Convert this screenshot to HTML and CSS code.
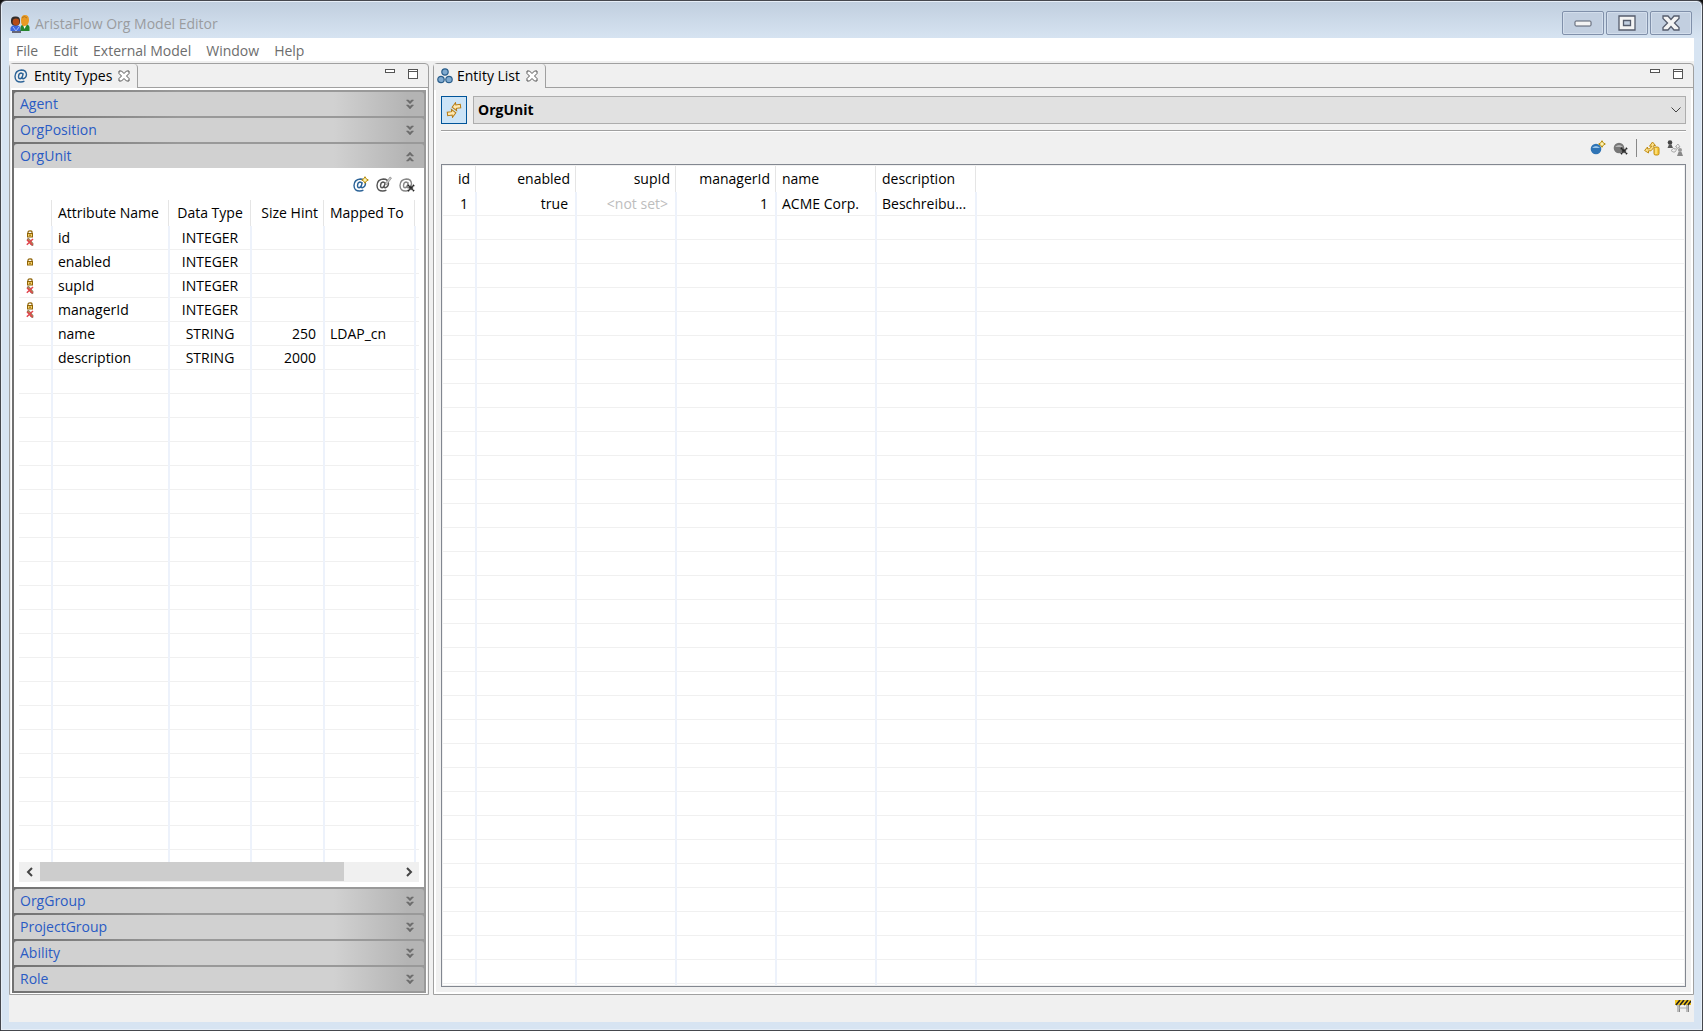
FILE: index.html
```html
<!DOCTYPE html>
<html lang="en">
<head>
<meta charset="utf-8">
<title>AristaFlow Org Model Editor</title>
<link rel="stylesheet" href="styles.css">
</head>
<body>
<svg class="sprites" aria-hidden="true">
  <symbol id="chev" viewBox="0 0 8 11"><path d="M0.5 1h2l1.500 1.500 1.500-1.500h2L4 4.800z M0.500 6h2l1.500 1.500 1.500-1.500h2L4 9.900z" fill="#6b6b6b" stroke="#6b6b6b" stroke-width=".6"/></symbol>
  <symbol id="close" viewBox="0 0 12 12"><path d="M1 1h2.500L6 3.500 8.500 1H11v2.500L8.500 6 11 8.500V11H8.500L6 8.500 3.500 11H1V8.500L3.500 6 1 3.500z" fill="#fff" stroke="#555"/></symbol>
  <symbol id="lock" viewBox="0 0 8 8"><path d="M2 3.500V2q0-1.200 2-1.200T6 2v1.500" fill="none" stroke="#8f6407" stroke-width="1.200"/><rect x="1.500" y="3.500" width="5" height="3.500" fill="#f5cf69" stroke="#8f6407"/><path d="M3 5.200h2" stroke="#8f6407"/></symbol>
  <symbol id="nopen" viewBox="0 0 8 8"><path d="M1 1l2-.5 4 5v2l-2-.5z" fill="#b98a54" stroke="#6c4b34" stroke-width=".6"/><path d="M.8 6.800L7 1M1 2l5.500 5" stroke="#e2444d" stroke-width="1.500"/></symbol>
  <symbol id="at" viewBox="0 0 14 14"><path d="M9.300 4.200L8.200 8.400q-.2 1.500 1.100 1.300Q12.200 9 12.500 5.800 12.200 1 7.300 1 1.200 1.500 1 7.400q.2 5.600 5.800 5.600 2 0 3.600-.8M8.900 5.500Q8.400 4 7 4 4.700 4.400 4.500 7.500 4.500 9.700 6.100 9.700 7.800 9.500 8.500 7.300" fill="none" stroke="currentColor" stroke-width="1.400"/></symbol>
  <symbol id="spark" viewBox="0 0 8 8"><path d="M4 .7L5.200 2.800 7.300 4 5.200 5.200 4 7.300 2.800 5.200.7 4 2.800 2.800z" fill="#fff3b0" stroke="#b58b0b"/></symbol>
  <symbol id="xx" viewBox="0 0 8 8"><path d="M1 1l6 6M7 1L1 7" stroke="#222" stroke-width="2" stroke-dasharray="1.300 .5"/></symbol>
</svg>
<div class="window">
  <header class="titlebar">
    <svg class="app-icon" viewBox="0 0 20 18"><path d="M2 15h9v3H2z" fill="#667"/><path d="M.5 16v-3q1-3 5-3t5 3v3z" fill="#3e67dc"/><path d="M3 12l3 4 3-4" stroke="#9fb9ff" fill="none"/><path d="M10.500 16v-4q1-3 4.500-3t4.500 3v4z" fill="#26862d"/><path d="M13 10l1.500 4 2-4z" fill="#fff"/><rect x="1" y="1.500" width="9" height="9" rx="4" fill="#302d2b"/><circle cx="6" cy="7" r="3.400" fill="#b54b16"/><path d="M11 5q0-5 4-5t4 5-4 6-4-6z" fill="#e99a24"/><path d="M12 3q2-3 5 0" stroke="#b37419" fill="none"/></svg>
    <h1>AristaFlow Org Model Editor</h1>
    <div class="win-buttons">
      <button aria-label="Minimize window"><svg viewBox="0 0 18 16"><rect x="1" y="6" width="16" height="5" rx="1" fill="#f4f4f4" stroke="#555c6c"/></svg></button>
      <button aria-label="Maximize window"><svg viewBox="0 0 18 16"><path d="M1 1h16v14H1zM5.500 5.500v5h7v-5z" fill="#f4f4f4" fill-rule="evenodd" stroke="#555c6c" stroke-width="1.300"/></svg></button>
      <button aria-label="Close window"><svg viewBox="0 0 18 16"><path d="M1 1h5l3 3.500L12 1h5v2.500L12.500 8l4.500 4.500V15h-5l-3-3.500L6 15H1v-2.500L5.500 8 1 3.500z" fill="#f4f4f4" stroke="#555c6c" stroke-width="1.300"/></svg></button>
    </div>
  </header>
  <div class="client">
    <nav class="menubar"><button>File</button><button>Edit</button><button>External Model</button><button>Window</button><button>Help</button></nav>
    <main class="workbench">
      <section class="view types">
        <div class="tabbar">
          <div class="tab"><svg class="tab-icon at-blue"><use href="#at"/></svg><h2>Entity Types</h2><button aria-label="Close Entity Types"><svg><use href="#close"/></svg></button></div>
          <div class="view-buttons"><button class="vmin" aria-label="Minimize"></button><button class="vmax" aria-label="Maximize"></button></div>
        </div>
        <div class="accordion">
          <button class="bar">Agent<svg><use href="#chev"/></svg></button>
          <button class="bar">OrgPosition<svg><use href="#chev"/></svg></button>
          <button class="bar open">OrgUnit<svg><use href="#chev"/></svg></button>
          <div class="drawer">
            <div class="tools">
              <button aria-label="Add attribute"><svg viewBox="0 0 16 16"><use href="#at" class="at-blue" y="2" width="14" height="14"/><use href="#spark" x="8" width="8" height="8"/></svg></button>
              <button aria-label="Edit attribute"><svg viewBox="0 0 16 16"><use href="#at" class="at-dark" y="2" width="14" height="14"/><path d="M9 8l5-7 1.500 1-5 7z" fill="#ccc" stroke="#888" stroke-width=".7"/></svg></button>
              <button aria-label="Delete attribute"><svg viewBox="0 0 16 16"><use href="#at" class="at-gray" y="2" width="14" height="14"/><use href="#xx" x="8" y="8" width="8" height="8"/></svg></button>
            </div>
            <div class="grid attr-grid">
              <table>
                <colgroup><col class="c-icon"><col class="c-attr"><col class="c-type"><col class="c-size"><col class="c-map"><col></colgroup>
                <thead><tr><th></th><th>Attribute Name</th><th class="mid">Data Type</th><th class="num">Size Hint</th><th>Mapped To</th><th></th></tr></thead>
                <tbody>
                  <tr><td><svg class="flags" viewBox="0 0 8 16"><use href="#lock" width="8" height="8"/><use href="#nopen" y="8" width="8" height="8"/></svg></td><td>id</td><td class="mid">INTEGER</td><td></td><td></td><td></td></tr>
                  <tr><td><svg class="flags" viewBox="0 0 8 16"><use href="#lock" y="4" width="8" height="8"/></svg></td><td>enabled</td><td class="mid">INTEGER</td><td></td><td></td><td></td></tr>
                  <tr><td><svg class="flags" viewBox="0 0 8 16"><use href="#lock" width="8" height="8"/><use href="#nopen" y="8" width="8" height="8"/></svg></td><td>supId</td><td class="mid">INTEGER</td><td></td><td></td><td></td></tr>
                  <tr><td><svg class="flags" viewBox="0 0 8 16"><use href="#lock" width="8" height="8"/><use href="#nopen" y="8" width="8" height="8"/></svg></td><td>managerId</td><td class="mid">INTEGER</td><td></td><td></td><td></td></tr>
                  <tr><td></td><td>name</td><td class="mid">STRING</td><td class="num">250</td><td>LDAP_cn</td><td></td></tr>
                  <tr><td></td><td>description</td><td class="mid">STRING</td><td class="num">2000</td><td></td><td></td></tr>
                </tbody>
              </table>
            </div>
            <div class="scroll">
              <button aria-label="Scroll left"><svg viewBox="0 0 8 10"><path d="M6 1L2 5l4 4" /></svg></button>
              <div class="track"><div class="thumb"></div></div>
              <button aria-label="Scroll right"><svg viewBox="0 0 8 10"><path d="M2 1l4 4-4 4"/></svg></button>
            </div>
          </div>
          <button class="bar">OrgGroup<svg><use href="#chev"/></svg></button>
          <button class="bar">ProjectGroup<svg><use href="#chev"/></svg></button>
          <button class="bar">Ability<svg><use href="#chev"/></svg></button>
          <button class="bar">Role<svg><use href="#chev"/></svg></button>
        </div>
      </section>
      <section class="view list">
        <div class="tabbar">
          <div class="tab"><svg class="tab-icon" viewBox="0 0 16 16"><g fill="#7fa9cf" stroke="#2b5f8c" stroke-width="1.200"><circle cx="8" cy="4" r="3.200"/><circle cx="4" cy="11.500" r="3.200"/><circle cx="12" cy="11.500" r="3.200"/></g></svg><h2>Entity List</h2><button aria-label="Close Entity List"><svg><use href="#close"/></svg></button></div>
          <div class="view-buttons"><button class="vmin" aria-label="Minimize"></button><button class="vmax" aria-label="Maximize"></button></div>
        </div>
        <div class="list-body">
          <div class="picker">
            <button class="toggle" aria-label="Link with selection" aria-pressed="true"><svg viewBox="0 0 16 16"><path d="M6.500 5L10.500 1v2.300H15v3.400h-4.500V9z M9.500 11L5.500 15v-2.300H1V9.300h4.500V7z" fill="#ffe9b0" stroke="#b57a12" transform="rotate(-8 8 8)"/></svg></button>
            <div class="combo">
              <select aria-label="Entity type"><option>OrgUnit</option></select>
              <svg viewBox="0 0 10 6"><path d="M.5.5L5 5 9.500.5" fill="none" stroke="#444"/></svg>
            </div>
          </div>
          <div class="tools list-tools">
            <button aria-label="New entity"><svg viewBox="0 0 16 16"><circle cx="6" cy="9" r="5.300" fill="#2f74b5"/><path d="M2 8q4-4 8 0z" fill="#9cc6ea"/><use href="#spark" x="8" width="8" height="8"/></svg></button>
            <button aria-label="Delete entity"><svg viewBox="0 0 16 16"><circle cx="6" cy="8" r="5.300" fill="#777"/><path d="M2 7q4-4 8 0z" fill="#b5b5b5"/><use href="#xx" x="7" y="7" width="8" height="8"/></svg></button>
            <span class="divider"></span>
            <button aria-label="Assign"><svg viewBox="0 0 16 16"><path d="M.6 10.500L3.500 7v1.800h2L8 6.200H5.500L8.500 2l3 3.500H9.800v2L7 10.800H4.500V13z" fill="#fbe08a" stroke="#c08c14"/><rect x="10" y="7" width="5" height="8" rx="1.500" fill="#f7c93a" stroke="#c08c14"/><path d="M12 8v6" stroke="#fff0b0"/></svg></button>
            <button aria-label="Staff"><svg viewBox="0 0 16 16"><path d="M4 10.500L7 8l1 1.500L10 7 8.500 6.500 11 4l2 3-2 .5L8 12H6z" fill="#eee" stroke="#999" stroke-width=".8"/><circle cx="3" cy="2.500" r="2.300" fill="#444"/><path d="M.5 8l1.500-3.500h2.500L6 8z" fill="#555"/><circle cx="13" cy="10" r="2" fill="#999"/><path d="M10 16l1.500-4h3l1.500 4z" fill="#888"/></svg></button>
          </div>
          <div class="grid entity-grid">
            <table>
              <colgroup><col class="c-id"><col class="c-col"><col class="c-col"><col class="c-col"><col class="c-col"><col class="c-col"><col></colgroup>
              <thead><tr><th class="num">id</th><th class="num">enabled</th><th class="num">supId</th><th class="num">managerId</th><th>name</th><th>description</th><th></th></tr></thead>
              <tbody><tr><td class="num">1</td><td class="num">true</td><td class="num unset">&lt;not set&gt;</td><td class="num">1</td><td>ACME Corp.</td><td>Beschreibu...</td><td></td></tr></tbody>
            </table>
          </div>
        </div>
      </section>
    </main>
    <footer class="status"><svg viewBox="0 0 16 14"><path d="M3 5v7M12 5v7M4.500 5v7M13.500 5v7" stroke="#888"/><path d="M4 8h9" stroke="#aaa"/><rect width="16" height="5" fill="#f3c51c"/><path d="M1 5l4-5M5 5l4-5M9 5l4-5M13 5l3-4" stroke="#222" stroke-width="1.600"/></svg></footer>
  </div>
</div>
</body>
</html>
```
FILE: styles.css
```css
* { box-sizing: border-box; }
body { margin: 0; background: #111; font: 14px/20px "Open Sans", "Noto Sans", sans-serif; color: #000; }
button { font: inherit; color: inherit; background: none; border: 0; padding: 0; display: flex; align-items: center; justify-content: center; }
h1, h2 { margin: 0; font-size: 14px; font-weight: 400; line-height: 20px; }
svg { display: block; flex: none; }
.sprites { position: absolute; width: 0; height: 0; }

.window { min-height: 100vh; display: flex; flex-direction: column; padding: 0 8px 8px; border: 1px solid #45474d; border-radius: 6px 6px 0 0; background: linear-gradient(#c0cede, #d7e4f2 38px); box-shadow: inset 0 0 0 1px #e6eef7; }
.titlebar { height: 37px; display: flex; align-items: center; gap: 5px; padding: 8px 0 0 1px; color: #9a9c9f; }
.app-icon { width: 20px; height: 18px; }
.win-buttons { margin: 0 2px 6px auto; display: flex; gap: 2px; padding-top: 4px; }
.win-buttons button { width: 42px; height: 24px; border: 1px solid #8090aa; border-radius: 2px; box-shadow: inset 0 0 0 1px #d3deec; background: #c2cfe0; }
.win-buttons svg { width: 18px; height: 16px; }

.client { flex: 1; display: flex; flex-direction: column; background: #f0f0f0; }
.menubar { height: 23px; background: #fff; color: #6d6d6d; display: flex; gap: 15px; padding: 2px 0 0 7px; }
.workbench { flex: 1; display: flex; gap: 4px; padding-top: 2px; }

.view { display: flex; flex-direction: column; border: 1px solid #a0a0a0; border-radius: 4px 4px 0 0; min-width: 0; }
.types { flex: none; width: 420px; }
.list { flex: 1; }
.tabbar { height: 24px; display: flex; justify-content: space-between; border-bottom: 1px solid #a0a0a0; }
.tab { height: 24px; display: flex; align-items: center; padding: 0 7px 0 4px; border-right: 1px solid #a0a0a0; border-radius: 0 4px 0 0; background: #f0f0f0; }
.tab h2 { margin: 0 6px; }
.tab button svg { width: 12px; height: 12px; }
.tab-icon { width: 14px; height: 14px; }
.list .tab-icon { width: 16px; height: 16px; }
.list .tab { padding-left: 3px; }
.list .tab h2 { margin-left: 4px; }
.at-blue { color: #2d6498; }
.at-dark { color: #555; }
.at-gray { color: #888; }
.view-buttons { display: flex; gap: 13px; padding: 5px 10px 0 0; }
.view-buttons button { background: #fff; border: 1px solid #555; width: 10px; }
.vmin { height: 4px; }
.vmax { height: 10px; }
.view-buttons .vmax { box-shadow: inset 0 1px #fff, inset 0 2px #555; }

.accordion { flex: 1; display: flex; flex-direction: column; gap: 2px; margin: 0 1px; border: 2px solid #fff; border-width: 2px 1px 1px; padding: 2px; background: linear-gradient(90deg, #707070, #999 40%); }
.bar { flex: none; height: 24px; padding: 0 10px 0 6px; justify-content: space-between; border-radius: 3px 3px 0 0; color: #2a5bc4; background: linear-gradient(90deg, #d1d1d1 78%, #b4b4b4 96%); }
.bar svg { width: 8px; height: 11px; }
.bar.open { margin-bottom: -2px; }
.bar.open svg { transform: rotate(180deg); }
.drawer { flex: 1; display: flex; flex-direction: column; background: #fff; padding: 8px 5px 5px; }
.tools { display: flex; justify-content: flex-end; gap: 7px; }
.tools svg { width: 16px; height: 16px; }
.drawer .tools { padding: 0 4px 8px 0; }

.grid { flex: 1; background-color: #fff; background-repeat: no-repeat; }
.grid table { width: 100%; table-layout: fixed; border-collapse: separate; border-spacing: 0; }
.grid th, .grid td { padding: 0 5px; font-weight: 400; text-align: left; white-space: nowrap; height: 24px; }
.grid th { height: 26px; background: #fff; }
.grid th:not(:last-child) { background: linear-gradient(#e5e5e5, #e5e5e5) right 1px top 0 / 1px 100% no-repeat #fff; }
.grid .num { text-align: right; }
.grid td.num { padding-right: 9px; }
.grid th.num { padding-right: 7px; }
.grid .mid { text-align: center; }
.grid .unset { color: #bdbdbd; }
.flags { width: 8px; height: 16px; margin-left: 2px; }
.attr-grid {
  background-image:
    linear-gradient(90deg, transparent 32px, #edf2fb 32px 34px, transparent 34px 149px, #edf2fb 149px 151px, transparent 151px 231px, #edf2fb 231px 233px, transparent 233px 304px, #edf2fb 304px 306px, transparent 306px 395px, #edf2fb 395px 397px, transparent 397px),
    repeating-linear-gradient(transparent 0 23px, #f0f0f0 23px 24px);
  background-position: 0 0, 0 26px;
}
.attr-grid .mid { padding: 0 7px 0 5px; }
.c-icon { width: 34px; }
.c-attr { width: 117px; }
.c-type { width: 82px; }
.c-size { width: 73px; }
.c-map { width: 91px; }
.scroll { height: 20px; display: flex; background: #f0f0f0; }
.scroll button { width: 21px; }
.scroll svg { width: 8px; height: 10px; fill: none; stroke: #444; stroke-width: 2; }
.track { flex: 1; }
.thumb { width: 85%; height: 19px; background: #cdcdcd; }

.list-body { flex: 1; display: flex; flex-direction: column; margin-top: 2px; border: solid #fff; border-width: 0 2px 2px; padding: 6px 5px 5px; }
.picker { display: flex; gap: 6px; padding-bottom: 6px; border-bottom: 1px solid #a0a0a0; box-shadow: 0 1px #fff; }
.toggle { width: 26px; height: 28px; border: 1px solid #005499; background: #cce4f7; }
.toggle svg { width: 16px; height: 16px; }
.combo { flex: 1; display: grid; align-items: center; }
.combo select { grid-area: 1 / 1; width: 100%; height: 28px; border: 1px solid #adadad; border-radius: 0; background: #e1e1e1; font: bold 14px/20px "Open Sans", "Noto Sans", sans-serif; color: #000; padding: 0 4px; appearance: none; }
.combo svg { grid-area: 1 / 1; justify-self: end; width: 10px; height: 6px; margin-right: 5px; pointer-events: none; }
.list-tools { align-items: center; height: 33px; padding-right: 3px; }
.divider { width: 1px; height: 18px; background: #888; }
.entity-grid {
  border: 1px solid #828790; padding: 1px;
  background-image:
    linear-gradient(90deg, transparent 32px, #edf2fb 32px 34px, transparent 34px 132px, #edf2fb 132px 134px, transparent 134px 232px, #edf2fb 232px 234px, transparent 234px 332px, #edf2fb 332px 334px, transparent 334px 432px, #edf2fb 432px 434px, transparent 434px 532px, #edf2fb 532px 534px, transparent 534px),
    repeating-linear-gradient(transparent 0 23px, #f0f0f0 23px 24px);
  background-position: 0 0, 0 26px;
  background-origin: content-box;
  background-clip: content-box;
}
.c-id { width: 34px; }
.c-col { width: 100px; }

.status { height: 27px; display: flex; justify-content: flex-end; padding: 5px 3px 0 0; }
.status svg { width: 16px; height: 14px; }
```
